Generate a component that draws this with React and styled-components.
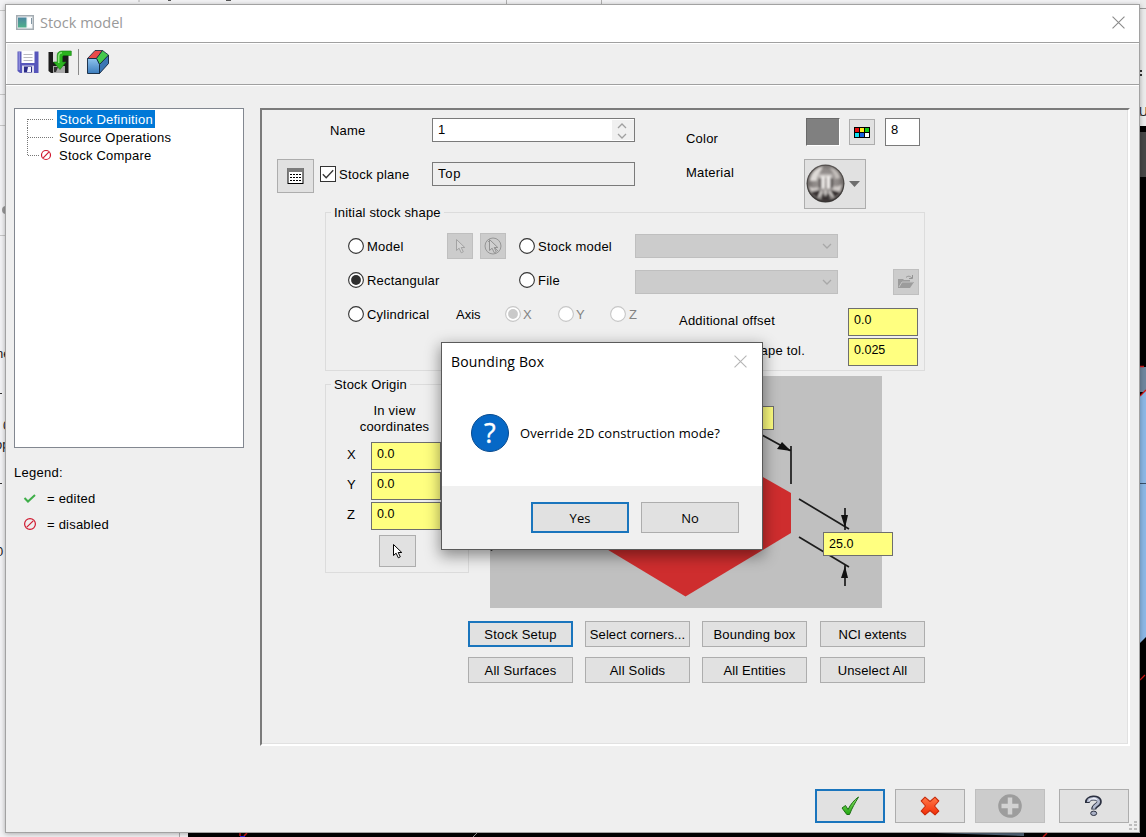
import React from "react";
import styled, { createGlobalStyle, css } from "styled-components";

const Global = createGlobalStyle`
  html, body { margin: 0; padding: 0; overflow: hidden; background: #f3f3f3; }
  * { box-sizing: border-box; }
  svg { display: block; flex: none; }
`;

const classic = '"Liberation Sans", Arial, sans-serif';
const modern = '"Open Sans", "Noto Sans", sans-serif';

const Desktop = styled.div`
  position: relative;
  width: 1146px;
  height: 837px;
  overflow: hidden;
  padding: 4px 0 0 5px;
  font: 13px/16px ${classic};
  color: #000;
`;
const Backdrop = styled.svg`
  position: absolute;
  left: 0;
  top: 0;
`;
const Window = styled.div`
  position: relative;
  width: 1135px;
  height: 829px;
  display: flex;
  flex-direction: column;
  background: #efefef;
  border: 1px solid #a2a2a2;
  box-shadow: 0 1px 5px rgba(0, 0, 0, 0.3);
`;
const TitleBar = styled.div`
  height: 38px;
  flex: none;
  display: flex;
  align-items: center;
  background: #fff;
  border-bottom: 1px solid #a0a0a0;
  padding: 0 14px 2px 10px;
`;
const Title = styled.div`
  flex: 1;
  margin-left: 6px;
  padding-top: 1px;
  font: 14.5px/20px ${modern};
  color: #999;
`;
const Toolbar = styled.div`
  height: 42px;
  flex: none;
  display: flex;
  align-items: center;
  padding: 0 0 3px 11px;
  border-bottom: 1px solid #a0a0a0;
  box-shadow: 0 1px 0 #fff, inset 1px 0 0 #fff, inset 0 1px 0 #fff;
`;
const ToolSeparator = styled.div`
  width: 1px;
  height: 26px;
  margin: 0 7px 0 6px;
  background: #8a8a8a;
`;
const ToolIcon = styled.div`
  margin-right: ${(p) => p.$gap || 0}px;
`;
const Body = styled.div`
  display: flex;
  height: 662px;
  flex: none;
  padding: 23px 0 0 8px;
`;
const Sidebar = styled.div`
  width: 230px;
  flex: none;
  margin-right: 16px;
`;
const Tree = styled.div`
  height: 340px;
  background: #fff;
  border: 1px solid #828790;
  padding: 1px 0 0 12px;
`;
const TreeRow = styled.div`
  display: flex;
  height: 18px;
  align-items: center;
`;
const TreeLabel = styled.span`
  height: 18px;
  line-height: 20px;
  padding: 0 2px;
  white-space: nowrap;
  letter-spacing: 0.22px;
  ${(p) => p.$selected && css`background: #0078d7; color: #fff;`}
`;
const LegendTitle = styled.div`
  margin: 17px 0 9px 0;
  letter-spacing: 0.25px;
`;
const LegendRow = styled.div`
  display: flex;
  align-items: center;
  height: 16px;
  margin-bottom: 10px;
  padding-left: 9px;
  gap: 10px;
`;
const Panel = styled.div`
  width: 870px;
  height: 638px;
  flex: none;
  display: flex;
  flex-direction: column;
  border: 2px solid;
  border-color: #7b7b7b #fff #fff #7b7b7b;
  box-shadow: inset -1px -1px 0 #e1e1e1;
`;
const Header = styled.div`
  height: 93px;
  flex: none;
  display: flex;
`;
const PlaneColumn = styled.div`
  padding: 49px 6px 0 15px;
`;
const NameColumn = styled.div`
  width: 366px;
  padding-top: 8px;
`;
const FieldRow = styled.div`
  display: flex;
  align-items: center;
  height: 24px;
  margin-bottom: 20px;
`;
const FieldLabel = styled.div`
  display: flex;
  align-items: center;
  gap: 3px;
  width: 112px;
  padding-left: ${(p) => p.$indent || 0}px;
`;
const TextField = styled.div`
  width: ${(p) => p.$w}px;
  height: ${(p) => p.$h}px;
  flex: none;
  display: flex;
  justify-content: space-between;
  line-height: ${(p) => p.$lh || p.$h - 2}px;
  padding-left: 5px;
  border: 1px solid #7a7a7a;
  background: ${(p) => p.$bg || "#fff"};
  letter-spacing: ${(p) => p.$ls || 0}px;
`;
const YellowField = styled(TextField).attrs({ $w: 70, $lh: 22 })`
  height: ${(p) => p.$h || 28}px;
  border-color: #6e6e6e;
  background: #ffff80;
  font-size: 12.5px;
`;
const Spinner = styled.div`
  width: 22px;
  margin: 1px 0;
  display: flex;
  flex-direction: column;
  align-items: center;
  justify-content: center;
  gap: 4px;
  background: #f0f0f0;
  padding: 1px 2px 0 0;
`;
const LabelColumn = styled.div`
  width: 118px;
  display: flex;
  flex-direction: column;
  gap: 16px;
  padding-top: 19px;
`;
const Text = styled.div`
  white-space: nowrap;
  padding-top: 2px;
  letter-spacing: 0.22px;
`;
const AppearanceColumn = styled.div`
  padding-top: 7px;
`;
const ColorRow = styled.div`
  display: flex;
  align-items: center;
  height: 30px;
  padding-left: 2px;
`;
const Swatch = styled.div`
  width: 34px;
  height: 28px;
  margin-right: 9px;
  border: 1px solid #696969;
  border-right: 1px solid #fff;
  border-bottom: 1px solid #fff;
  background: #808080;
`;
const Button = styled.div`
  width: ${(p) => p.$w}px;
  height: ${(p) => p.$h}px;
  flex: none;
  display: flex;
  align-items: center;
  justify-content: center;
  white-space: nowrap;
  background: ${(p) => (p.$disabled ? "#cccccc" : "#e1e1e1")};
  border: ${(p) => (p.$focus ? "2px solid #1a75bd" : p.$disabled ? "1px solid #bfbfbf" : "1px solid #adadad")};
`;
const ActionButton = styled(Button)`
  padding-top: 2px;
  letter-spacing: ${(p) => p.$ls}px;
`;
const MaterialButton = styled(Button)`
  margin-top: 12px;
  padding: 0 5px 0 1px;
  justify-content: space-between;
`;
const ColorCode = styled(TextField)`
  margin-left: 10px;
`;
const Group = styled.div`
  position: relative;
  width: ${(p) => p.$w}px;
  flex: none;
  display: flex;
  flex-direction: column;
  &::before {
    content: "";
    position: absolute;
    inset: 9px 0 0 0;
    border: 1px solid #dcdcdc;
  }
`;
const Legend = styled.div`
  position: relative;
  align-self: flex-start;
  height: 18px;
  line-height: 20px;
  margin-left: 6px;
  padding: 0 3px;
  background: #efefef;
  letter-spacing: 0.18px;
`;
const ShapeGroup = styled(Group)`
  height: 168px;
  margin-left: 63px;
`;
const ShapeBody = styled.div`
  display: grid;
  grid-template-columns: 171px 116px 203px 1fr;
  grid-template-rows: 30px 38px;
  align-items: center;
  margin-top: 10px;
  padding: 0 6px 0 23px;
  position: relative;
`;
const Choice = styled.div`
  display: flex;
  align-items: center;
  gap: 3px;
  height: 16px;
  white-space: nowrap;
  color: ${(p) => (p.$disabled ? "#838383" : "#000")};
`;
const ModelCell = styled.div`
  display: flex;
  align-items: center;
  justify-content: space-between;
  padding-right: 13px;
`;
const PickButtons = styled.div`
  display: flex;
  gap: 7px;
`;
const Combo = styled.div`
  height: 24px;
  display: flex;
  align-items: center;
  justify-content: flex-end;
  padding-right: 5px;
  background: #ccc;
  border: 1px solid #bfbfbf;
  margin-top: ${(p) => p.$shift || 0}px;
`;
const FolderCell = styled.div`
  display: flex;
  justify-content: flex-end;
  padding-top: 3px;
`;
const ShapeFooter = styled.div`
  position: relative;
  display: flex;
  padding: 7px 7px 0 23px;
`;
const CylinderCell = styled.div`
  width: 108px;
`;
const AxisCell = styled.div`
  display: flex;
  align-items: center;
  height: 16px;
  width: 223px;
`;
const AxisLabel = styled(Text)`
  width: 49px;
  letter-spacing: 0;
`;
const AxisChoice = styled(Choice)`
  width: ${(p) => p.$w}px;
  gap: ${(p) => p.$gap}px;
`;
const OffsetLabels = styled.div`
  flex: 1;
  display: flex;
  flex-direction: column;
  gap: 12px;
  padding-top: 5px;
`;
const ToleranceLabel = styled(Text)`
  width: 126px;
  text-align: right;
`;
const FieldStack = styled.div`
  display: flex;
  flex-direction: column;
  gap: 2px;
  padding-top: ${(p) => p.$drop || 0}px;
`;
const Lower = styled.div`
  display: flex;
  align-items: flex-start;
  margin: 5px 0 0 63px;
`;
const OriginGroup = styled(Group)`
  height: 198px;
  margin: -1px 21px 0 0;
`;
const OriginHeading = styled.div`
  position: relative;
  margin: 10px 4px 7px 0;
  width: 139px;
  text-align: center;
  letter-spacing: 0.22px;
`;
const OriginBody = styled.div`
  position: relative;
  display: flex;
`;
const AxisNames = styled.div`
  width: 46px;
  padding: 3px 0 0 22px;
  display: flex;
  flex-direction: column;
  gap: 12px;
`;
const OriginPick = styled(Button)`
  position: relative;
  margin: 5px 0 0 54px;
  padding-right: 2px;
`;
const Preview = styled.div`
  position: relative;
  width: 392px;
  height: 232px;
`;
const DimensionField = styled(YellowField)`
  position: absolute;
  left: ${(p) => p.$x}px;
  top: ${(p) => p.$y}px;
`;
const Actions = styled.div`
  display: grid;
  grid-template-columns: 117px 117px 118px 105px;
  row-gap: 10px;
  margin: 13px 0 0 206px;
`;
const Footer = styled.div`
  display: flex;
  justify-content: flex-end;
  padding: 42px 10px 0 0;
`;
const FooterButton = styled(Button)`
  margin-left: ${(p) => p.$gap}px;
`;
const Grip = styled.svg`
  position: absolute;
  right: 2px;
  bottom: 2px;
`;
const Dialog = styled.div`
  position: absolute;
  left: 441px;
  top: 342px;
  width: 322px;
  height: 208px;
  display: flex;
  flex-direction: column;
  background: #fff;
  border: 1px solid #5a5a5a;
  box-shadow: 0 5px 14px 1px rgba(0, 0, 0, 0.42);
  font: 13px/18px ${modern};
`;
const DialogTitle = styled.div`
  display: flex;
  align-items: center;
  justify-content: space-between;
  height: 37px;
  padding: 0 15px 0 9px;
  font-size: 14px;
  letter-spacing: 0.15px;
`;
const DialogMessage = styled.div`
  display: flex;
  flex: 1;
  align-items: center;
  gap: 11px;
  padding: 0 0 1px 29px;
  white-space: nowrap;
  letter-spacing: 0.1px;
`;
const DialogActions = styled.div`
  height: 63px;
  display: flex;
  justify-content: flex-end;
  gap: 12px;
  padding: 16px 23px 0 0;
  background: #f0f0f0;
`;

const Radio = ({ on, disabled }) => (
  <svg width="16" height="16" viewBox="0 0 16 16">
    <circle cx="8" cy="8" r="7.4" fill="#fff" stroke={disabled ? "#c6c6c6" : "#333"} strokeWidth="1.1" />
    {on && <circle cx="8" cy="8" r="4.9" fill={disabled ? "#c9c9c9" : "#2e2e2e"} />}
  </svg>
);
const Checkbox = () => (
  <svg width="16" height="16" viewBox="0 0 16 16">
    <rect x="0.5" y="0.5" width="15" height="15" fill="#fff" stroke="#333" />
    <path d="M2.8 8.2l3.4 3.5 7-7.4" fill="none" stroke="#333" strokeWidth="1.3" />
  </svg>
);
const Chevron = ({ up, color = "#a0a0a0" }) => (
  <svg width="10" height="6" viewBox="0 0 10 6">
    <path d={up ? "M1 5l4-4 4 4" : "M1 1l4 4 4-4"} fill="none" stroke={color} strokeWidth="1.3" />
  </svg>
);
const Close = ({ size, color }) => (
  <svg width={size} height={size} viewBox="0 0 12 12">
    <path d="M.5.5l11 11M11.5.5l-11 11" stroke={color} strokeWidth="1" fill="none" />
  </svg>
);
const Prohibited = () => (
  <svg width="14" height="14" viewBox="0 0 14 14">
    <circle cx="7" cy="7" r="5.4" fill="none" stroke="#d0182f" strokeWidth="1.2" />
    <path d="M3.800 10.200l6.400-6.400" stroke="#d0182f" strokeWidth="1.200" />
  </svg>
);
const Cursor = ({ stroke = "#000", fill = "#fff", children }) => (
  <svg width="20" height="20" viewBox="0 0 20 20">
    {children}
    <path d="M6.5 3.5v11l2.6-2.3 2.2 4.6 2-1-2.1-4.3h3.600z" fill={fill} stroke={stroke} strokeWidth="1" />
  </svg>
);
const AppIcon = () => (
  <svg width="18" height="15" viewBox="0 0 18 15">
    <defs>
      <linearGradient id="app" x1="0" y1="0" x2="0" y2="1">
        <stop offset="0" stopColor="#4c86a0" />
        <stop offset="1" stopColor="#4fb08a" />
      </linearGradient>
    </defs>
    <rect x="0.75" y="0.75" width="16.5" height="13.5" fill="#f4f7f9" stroke="#a4acb2" strokeWidth="1.5" />
    <rect x="2" y="2.5" width="8.5" height="10" fill="url(#app)" />
    <rect x="12" y="3" width="3" height="9" fill="#fff" />
    <path d="M15.5 3v6" stroke="#8297a5" />
  </svg>
);
const SaveIcon = () => (
  <svg width="22" height="24" viewBox="0 0 22 24">
    <path d="M.5 1.500h21V23H3l-2.500-2z" fill="#5756bb" />
    <path d="M1.500 2h1.500v18H1.500z" fill="#8d8cdb" />
    <rect x="4.500" y="1" width="13" height="12" fill="#fdfdff" />
    <path d="M6.500 4.500h9M6.500 7.500h9M6.500 10.500h9" stroke="#b9b9bf" />
    <rect x="5" y="15.500" width="12" height="7.500" fill="#dcdcee" />
    <rect x="7" y="16.500" width="8" height="6" fill="#2b2b86" />
    <path d="M11 17h3v5h-4z" fill="#f4f4ff" />
  </svg>
);
const SaveAsIcon = () => (
  <svg width="24" height="24" viewBox="0 0 24 24">
    <path d="M.5 2h20v21H3l-2.500-2z" fill="#1c1c1c" />
    <rect x="5" y="2" width="9" height="10" fill="#dedede" />
    <path d="M5 16h12v7H5z" fill="#a8a8a8" />
    <path d="M6 17h4l-2 5H6z" fill="#333" />
    <path d="M23.300 1v4.500h-6.800c-1.500 0-2 .6-2 2V12h3.500l-6 7.500L5.500 12h3.700V5.500C9.200 2.500 11 1 14 1z" fill="#2bb41f" stroke="#167d10" strokeWidth=".6" />
    <path d="M10.700 13V6.500c0-2.500 1-3.700 3.300-3.700" fill="none" stroke="#8be87c" strokeWidth="1.500" />
  </svg>
);
const CubeIcon = () => (
  <svg width="24" height="26" viewBox="0 0 24 26">
    <defs>
      <linearGradient id="cf" x1="0" y1="0" x2="0" y2="1">
        <stop offset="0" stopColor="#8fc3ee" />
        <stop offset="1" stopColor="#3c7dbd" />
      </linearGradient>
    </defs>
    <path d="M13.500 15.500l9-9.500V14.500l-9 10z" fill="#3a76b4" stroke="#10243c" strokeWidth=".9" />
    <path d="M1.500 9.500l7.500-8h7.500L10.500 9.500z" fill="#e94a4a" stroke="#10243c" strokeWidth=".8" />
    <path d="M16.500 1.500l6 4.500-9 9.500-3-6z" fill="#44c94c" stroke="#10243c" strokeWidth=".8" />
    <path d="M1.500 9.500h9l3 6v9h-12z" fill="url(#cf)" stroke="#10243c" strokeWidth=".9" />
  </svg>
);
const TableIcon = () => (
  <svg width="17" height="16" viewBox="0 0 17 16">
    <rect x="1" y="0.5" width="15" height="15" fill="#fff" stroke="#000" strokeWidth="1" />
    <rect x="0.5" y="0" width="16" height="4" fill="#7d7d7d" />
    <path d="M3 6.500h11M3 9.500h11M3 12.500h11" stroke="#000" strokeDasharray="2 1" />
  </svg>
);
const PaletteIcon = () => (
  <svg width="16" height="11" viewBox="0 0 16 11">
    <rect width="16" height="11" fill="#000" />
    {["#e81010", "#ffee20", "#18c818", "#10e0f0", "#1860e0", "#ffffff"].map((c, i) => (
      <rect key={c} x={1 + (i % 3) * 5} y={1 + Math.floor(i / 3) * 5} width="4" height="4" fill={c} />
    ))}
  </svg>
);
const Sphere = () => (
  <svg width="39" height="42" viewBox="0 0 40 42">
    <defs>
      <radialGradient id="sp" cx=".5" cy=".45" r=".55">
        <stop offset="0" stopColor="#a5a09e" />
        <stop offset=".6" stopColor="#8d8886" />
        <stop offset=".86" stopColor="#6f6a68" />
        <stop offset="1" stopColor="#2b2827" />
      </radialGradient>
      <filter id="soft"><feGaussianBlur stdDeviation="1" /></filter>
      <clipPath id="ball"><circle cx="20" cy="20.500" r="19.300" /></clipPath>
    </defs>
    <circle cx="20" cy="20.500" r="19.300" fill="url(#sp)" />
    <g clipPath="url(#ball)">
      <g filter="url(#soft)">
        <path d="M4 18C5 9 10 5 17 3c0 4-5 7-6 15z" fill="#dedad7" />
        <path d="M24 4c6 1 10 5 11 11l-5 1c-1-5-3-8-6-12z" fill="#c2bdba" />
        <path d="M3 23c3 2 6 2 9 1l1 3-8 2zM37 21c-3 2-6 3-9 2l-1 4 8 2z" fill="#cfcac7" />
        <path d="M13 11h14v4H13z" fill="#c9c5c2" />
        <path d="M13 15h3v10h-3zM25 15h3v10h-3z" fill="#625d5b" />
        <path d="M16 13h3v13h-3zM21.500 13h3v13h-3z" fill="#f7f4f2" />
        <path d="M5 30c4-1 7-3 10-2l-2 8zM35 30c-4-1-7-3-10-2l2 8zM17 31h6l2 8h-9z" fill="#373332" />
        <path d="M16 28l-3 7M20 27v6M24 28l4 7" stroke="#e9e5e2" strokeWidth="1.600" />
      </g>
    </g>
    <circle cx="20" cy="20.500" r="18.800" fill="none" stroke="#393534" strokeOpacity=".6" strokeWidth="1.200" />
  </svg>
);
const FolderIcon = () => (
  <svg width="18" height="14" viewBox="0 0 18 14">
    <path d="M1 13V4h5l1 1h6v2h4l-4 6z" fill="#9c9c9c" />
    <path d="M2 12l3-5h11" fill="none" stroke="#c4c4c4" />
    <path d="M9 2.500c2-2 4-1.500 6 .5M15.500 0v3.500H12" fill="none" stroke="#939393" />
  </svg>
);
const QuestionIcon = () => (
  <svg width="38" height="38" viewBox="0 0 38 38">
    <circle cx="19" cy="19" r="18.500" fill="#0668c6" stroke="#084b8f" />
    <text x="19" y="28.500" textAnchor="middle" fontFamily="Open Sans, sans-serif" fontSize="27" fill="#fff" stroke="#fff" strokeWidth=".4">?</text>
  </svg>
);
const GreenCheck = () => (
  <svg width="20" height="20" viewBox="0 0 20 20">
    <defs>
      <linearGradient id="gc" x1="0" y1="0" x2="0" y2="1">
        <stop offset="0" stopColor="#8fe36b" />
        <stop offset="1" stopColor="#22a810" />
      </linearGradient>
    </defs>
    <path d="M2 12l3.500-2.500 2.500 4C10.500 8.500 14 4 18.500 1 15 7 12 12 9.500 18.500H6.800z" fill="url(#gc)" stroke="#1c6e12" />
  </svg>
);
const RedCross = () => (
  <svg width="20" height="20" viewBox="0 0 20 20">
    <defs>
      <linearGradient id="rc" x1="0" y1="0" x2="0" y2="1">
        <stop offset="0" stopColor="#ff7a4a" />
        <stop offset="1" stopColor="#f22c06" />
      </linearGradient>
    </defs>
    <path d="M5 1.200l5 4.300 5-4.300L18.800 5 14.500 10l4.300 5-3.800 3.800-5-4.300-5 4.300L1.200 15 5.500 10 1.200 5z" fill="url(#rc)" stroke="#c92a0a" strokeWidth="1.100" strokeLinejoin="round" />
  </svg>
);
const PlusDisc = () => (
  <svg width="24" height="24" viewBox="0 0 24 24">
    <circle cx="12" cy="12" r="11.800" fill="#9d9d9d" />
    <path d="M12 3.500v17M3.500 12h17" stroke="#d2d2d2" strokeWidth="4.500" />
  </svg>
);
const HelpIcon = () => (
  <svg width="18" height="22" viewBox="0 0 18 22">
    <g fill="none">
      <path d="M2.200 8C2 1.800 14.300 1.200 14.300 6.700c0 3.800-5.600 3.200-5.600 7.800" stroke="#2b3040" strokeWidth="5" />
      <path d="M3.200 7C3.500 2.600 13.700 2.200 13.700 6.700c0 3.300-5 3.200-5 7" stroke="#b4bbcf" strokeWidth="2.800" />
      <path d="M4 5.600c1.500-2.400 6-2.800 8-1" stroke="#eef0f7" strokeWidth="1.200" />
    </g>
    <ellipse cx="8.700" cy="18.300" rx="3" ry="2.200" fill="#aab1c6" stroke="#2b3040" />
  </svg>
);

const StockDrawing = () => (
  <svg width="392" height="232" viewBox="0 0 392 232">
    <rect width="392" height="232" fill="#c0c0c0" />
    <path d="M195.500 57L301 117v40L195.500 220.500 90 157v-40z" fill="#ce2d2e" />
    <g stroke="#1c1c1c" strokeWidth="1.700" fill="none">
      <path d="M250 47l51 28M301 70v38M309 123l50 30M309 161l50 30M355 132v22M355 210v-22" />
    </g>
    <path d="M301 75l-14-2 5-7zM355 152l-4-13h7zM355 190l-4 12h7z" fill="#111" />
    <path d="M0 173h5l-4 2z" fill="#111" />
  </svg>
);

const Scene = () => (
  <Backdrop width="1146" height="837" viewBox="0 0 1146 837">
    <rect width="1146" height="837" fill="#f3f3f5" />
    <path d="M0 10.500h6M0 94.500h6M0 125.500h6M0 235.500h6" stroke="#c8c8c8" />
    <path d="M506.500 0v4M601.500 0v4M139 0v2" stroke="#b0b0b0" />
    <path d="M226 .5h5M168 .5h3" stroke="#555" />
    <path d="M0 393.500h2M0 483.500h2" stroke="#333" />
    <circle cx="6" cy="210" r="4" fill="#9a9a9a" />
    <g fontFamily="Liberation Sans, sans-serif" fontSize="13" fill="#222">
      <text x="-4" y="358">ne</text>
      <text x="3" y="430">0</text>
      <text x="-5" y="449">op</text>
      <text x="-4" y="556">0</text>
    </g>
    <path d="M179.500 832v5" stroke="#aaa" />
    <rect x="188" y="832" width="958" height="5" fill="#000" />
    <path d="M240 833v3M247 833l-3 3" stroke="#d01515" strokeWidth="1.500" />
    <rect x="240" y="836" width="5" height="1" fill="#1818e0" />
    <path d="M473 837l4-4" stroke="#999" />
    <path d="M935 833h89v3z" fill="#56697c" />
    <path d="M1043 837l4-4" stroke="#d01515" strokeWidth="1.500" />
    <rect x="1140" y="0" width="6" height="126" fill="#ececec" />
    <path d="M1140 8.500h6M1140 115.500h6" stroke="#999" />
    <text x="1139" y="116" fontFamily="Liberation Sans, sans-serif" fontSize="12" fill="#222">U</text>
    <path d="M1140 70h2v2h-2zM1140 74h2v2h-2z" fill="#333" />
    <rect x="1140" y="126" width="6" height="711" fill="#000" />
    <rect x="1140" y="132" width="6" height="45" fill="#474747" />
    <rect x="1140" y="367" width="6" height="25" fill="#6f879f" />
    <path d="M1140 396l6-6v247l-6 6z" fill="#8cb8e6" />
    <path d="M1140 483.500h6" stroke="#395069" />
    <path d="M1140 366.500h4M1140 396l6-6M1140 680l5-5" stroke="#d01515" strokeWidth="1.300" />
  </Backdrop>
);

const TreeLines = ({ kind }) => (
  <svg width="30" height="18" viewBox="0 0 30 18">
    <path d={kind === "first" ? "M.5 18V9" : kind === "last" ? "M.5 0v9" : "M.5 0v18"} stroke="#777" strokeDasharray="1 1" />
    <path d={kind === "last" ? "M1 9.500h11" : "M1 9.500h26"} stroke="#777" strokeDasharray="1 1" />
    {kind === "last" && (
      <g fill="none" stroke="#d0182f" strokeWidth="1.200">
        <circle cx="19" cy="9" r="4.500" />
        <path d="M16.200 11.800l5.600-5.600" />
      </g>
    )}
  </svg>
);

const actions = [
  { label: "Stock Setup", focus: true },
  { label: "Select corners...", ls: 0.08 },
  { label: "Bounding box" },
  { label: "NCI extents", ls: 0 },
  { label: "All Surfaces" },
  { label: "All Solids" },
  { label: "All Entities", ls: 0.12 },
  { label: "Unselect All", ls: 0.15 },
];

export default function App() {
  return (
    <Desktop>
      <Global />
      <Scene />
      <Window>
        <TitleBar>
          <AppIcon />
          <Title>Stock model</Title>
          <Close size={13} color="#8a8a8a" />
        </TitleBar>
        <Toolbar>
          <ToolIcon $gap={9}><SaveIcon /></ToolIcon>
          <ToolIcon><SaveAsIcon /></ToolIcon>
          <ToolSeparator />
          <ToolIcon><CubeIcon /></ToolIcon>
        </Toolbar>
        <Body>
          <Sidebar>
            <Tree>
              <TreeRow><TreeLines kind="first" /><TreeLabel $selected>Stock Definition</TreeLabel></TreeRow>
              <TreeRow><TreeLines /><TreeLabel>Source Operations</TreeLabel></TreeRow>
              <TreeRow><TreeLines kind="last" /><TreeLabel>Stock Compare</TreeLabel></TreeRow>
            </Tree>
            <LegendTitle>Legend:</LegendTitle>
            <LegendRow>
              <svg width="14" height="12" viewBox="0 0 14 12">
                <path d="M1.500 6l3.500 3.500 7-6.500" fill="none" stroke="#3fae49" strokeWidth="2" />
              </svg>
              <Text>= edited</Text>
            </LegendRow>
            <LegendRow><Prohibited /><Text>= disabled</Text></LegendRow>
          </Sidebar>
          <Panel>
            <Header>
              <PlaneColumn><Button $w={37} $h={34}><TableIcon /></Button></PlaneColumn>
              <NameColumn>
                <FieldRow>
                  <FieldLabel $indent={10}><Text>Name</Text></FieldLabel>
                  <TextField $w={203} $h={24}>
                    1
                    <Spinner><Chevron up /><Chevron /></Spinner>
                  </TextField>
                </FieldRow>
                <FieldRow>
                  <FieldLabel><Checkbox /><Text>Stock plane</Text></FieldLabel>
                  <TextField $w={203} $h={24} $bg="#efefef" $ls={0.7}>Top</TextField>
                </FieldRow>
              </NameColumn>
              <LabelColumn>
                <Text>Color</Text>
                <Text>Material</Text>
              </LabelColumn>
              <AppearanceColumn>
                <ColorRow>
                  <Swatch />
                  <Button $w={26} $h={26}><PaletteIcon /></Button>
                  <ColorCode $w={35} $h={28} $lh={22}>8</ColorCode>
                </ColorRow>
                <MaterialButton $w={62} $h={50}>
                  <Sphere />
                  <svg width="11" height="6" viewBox="0 0 11 6"><path d="M0 0h11L5.500 6z" fill="#6d6d6d" /></svg>
                </MaterialButton>
              </AppearanceColumn>
            </Header>
            <ShapeGroup $w={600}>
              <Legend>Initial stock shape</Legend>
              <ShapeBody>
                <ModelCell>
                  <Choice><Radio /><Text>Model</Text></Choice>
                  <PickButtons>
                    <Button $w={26} $h={26} $disabled><Cursor stroke="#a3a3a3" fill="#d4d4d4" /></Button>
                    <Button $w={26} $h={26} $disabled>
                      <Cursor stroke="#929292" fill="#d0d0d0">
                        <circle cx="10" cy="10" r="8" fill="none" stroke="#969696" />
                        <path d="M4.500 4.500l11 11" stroke="#969696" />
                      </Cursor>
                    </Button>
                  </PickButtons>
                </ModelCell>
                <Choice><Radio /><Text>Stock model</Text></Choice>
                <Combo><Chevron color="#a8a8a8" /></Combo>
                <span />
                <Choice><Radio on /><Text>Rectangular</Text></Choice>
                <Choice><Radio /><Text>File</Text></Choice>
                <Combo $shift={3}><Chevron color="#a8a8a8" /></Combo>
                <FolderCell><Button $w={26} $h={26} $disabled><FolderIcon /></Button></FolderCell>
              </ShapeBody>
              <ShapeFooter>
                <CylinderCell><Choice><Radio /><Text>Cylindrical</Text></Choice></CylinderCell>
                <AxisCell>
                  <AxisLabel>Axis</AxisLabel>
                  <AxisChoice $w={53} $gap={2} $disabled><Radio on disabled /><Text>X</Text></AxisChoice>
                  <AxisChoice $w={52} $gap={2} $disabled><Radio disabled /><Text>Y</Text></AxisChoice>
                  <AxisChoice $w={40} $gap={3} $disabled><Radio disabled /><Text>Z</Text></AxisChoice>
                </AxisCell>
                <OffsetLabels>
                  <Text>Additional offset</Text>
                  <ToleranceLabel>Shape tol.</ToleranceLabel>
                </OffsetLabels>
                <FieldStack $drop={2}>
                  <YellowField>0.0</YellowField>
                  <YellowField>0.025</YellowField>
                </FieldStack>
              </ShapeFooter>
            </ShapeGroup>
            <Lower>
              <OriginGroup $w={144}>
                <Legend>Stock Origin</Legend>
                <OriginHeading>In view<br />coordinates</OriginHeading>
                <OriginBody>
                  <AxisNames><Text>X</Text><Text>Y</Text><Text>Z</Text></AxisNames>
                  <FieldStack>
                    <YellowField>0.0</YellowField>
                    <YellowField>0.0</YellowField>
                    <YellowField>0.0</YellowField>
                  </FieldStack>
                </OriginBody>
                <OriginPick $w={37} $h={32}><Cursor /></OriginPick>
              </OriginGroup>
              <Preview>
                <StockDrawing />
                <DimensionField $h={24} $x={214} $y={30} />
                <DimensionField $h={24} $x={333} $y={156}>25.0</DimensionField>
              </Preview>
            </Lower>
            <Actions>
              {actions.map(({ label, focus, ls = 0.22 }) => (
                <ActionButton key={label} $w={105} $h={26} $focus={focus} $ls={ls}>{label}</ActionButton>
              ))}
            </Actions>
          </Panel>
        </Body>
        <Footer>
          <FooterButton $w={70} $h={34} $focus><GreenCheck /></FooterButton>
          <FooterButton $w={70} $h={34} $gap={10}><RedCross /></FooterButton>
          <FooterButton $w={70} $h={34} $gap={10} $disabled><PlusDisc /></FooterButton>
          <FooterButton $w={70} $h={34} $gap={14}><HelpIcon /></FooterButton>
        </Footer>
        <Grip width="9" height="9" viewBox="0 0 9 9">
          <path d="M6 0h3v2H6zM1 3h3v2H1zM6 3h3v2H6zM1 7h3v2H1zM6 7h3v2H6z" fill="#bdbdbd" />
        </Grip>
      </Window>
      <Dialog>
        <DialogTitle>Bounding Box<Close size={13} color="#b5b5b5" /></DialogTitle>
        <DialogMessage><QuestionIcon />Override 2D construction mode?</DialogMessage>
        <DialogActions>
          <Button $w={98} $h={31} $focus>Yes</Button>
          <Button $w={98} $h={31}>No</Button>
        </DialogActions>
      </Dialog>
    </Desktop>
  );
}
